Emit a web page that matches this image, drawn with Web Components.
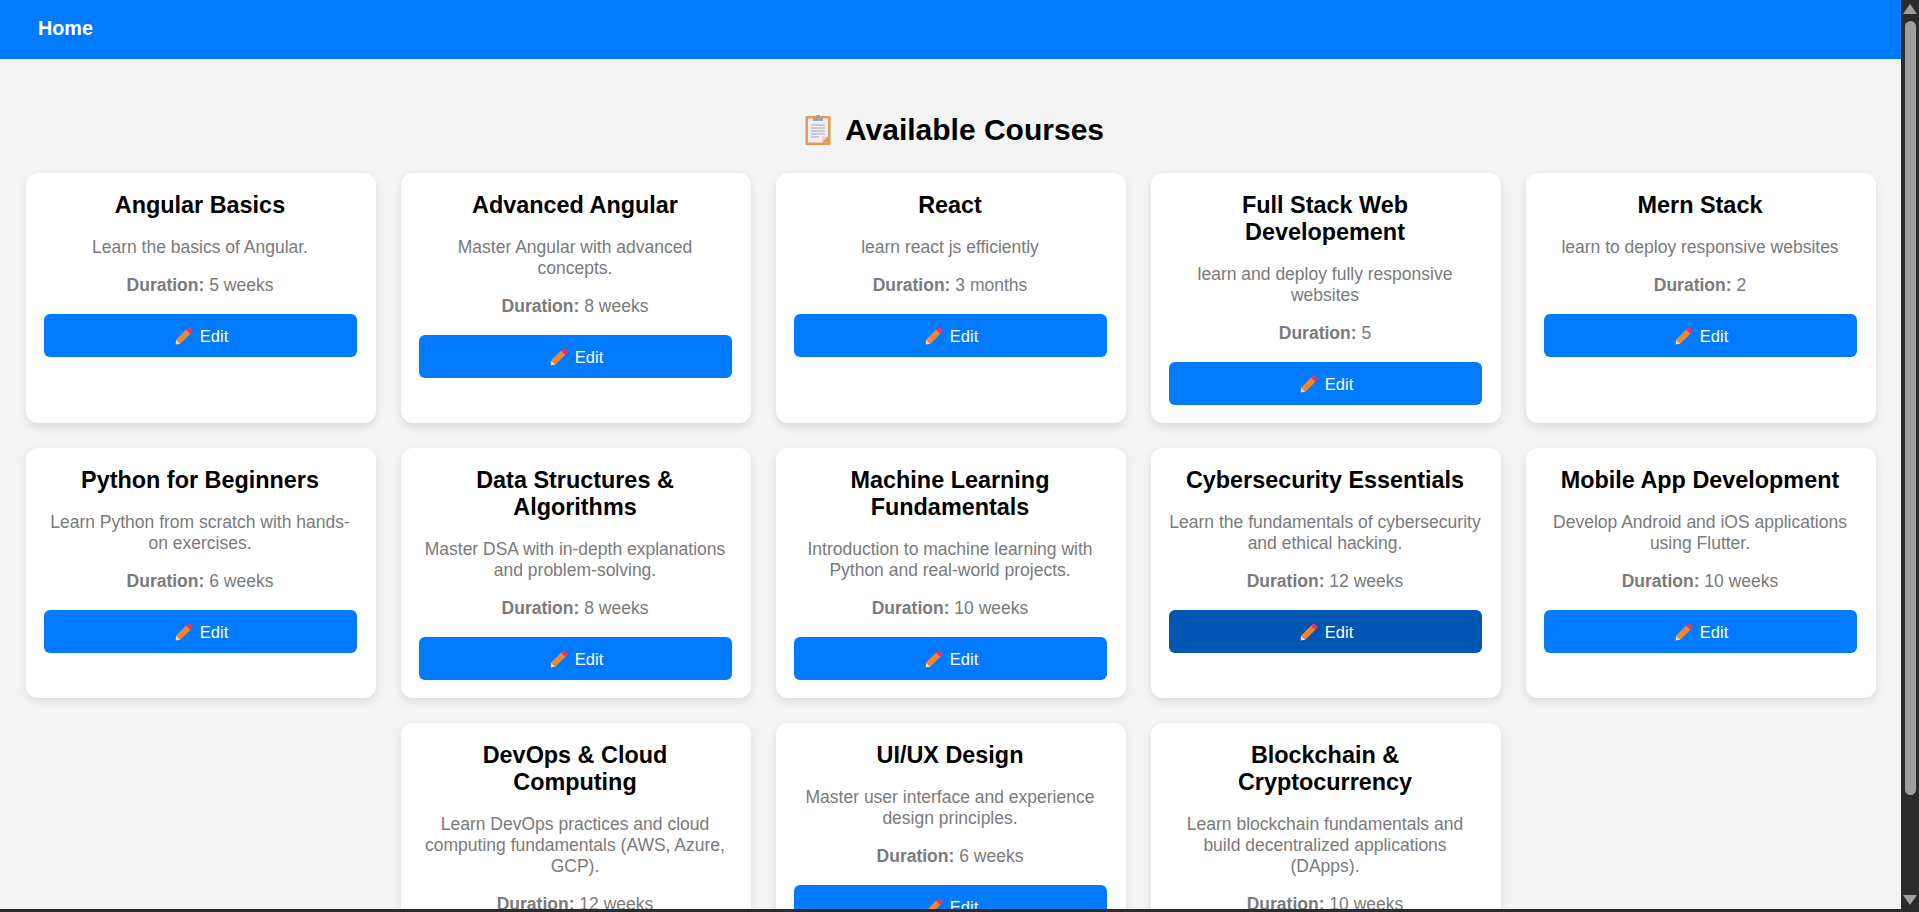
<!DOCTYPE html>
<html lang="en">
<head>
<meta charset="utf-8">
<title>Available Courses</title>
<style>
    html, body {
        margin: 0;
        height: 100%;
        overflow: hidden;
    }

    body {
        display: flex;
        flex-direction: column;
        background-color: #2b2b2b;
        font-family: "Liberation Sans", Arial, sans-serif;
    }

    #window {
        flex: 1;
        min-height: 0;
        display: flex;
    }

    #viewport {
        flex: 1;
        min-width: 0;
        overflow: hidden;
        background-color: #f4f4f4;
    }

    #bottom-edge {
        height: 3px;
    }
</style>
</head>
<body>
<div id="window">
    <div id="viewport">
        <app-navbar>Home</app-navbar>
        <page-heading>Available Courses</page-heading>
        <course-grid id="grid"></course-grid>
    </div>
    <fake-scrollbar></fake-scrollbar>
</div>
<div id="bottom-edge"></div>

<script>
class AppNavbar extends HTMLElement {
    connectedCallback() {
        this.attachShadow({ mode: "open" });
        this.shadowRoot.innerHTML = `
            <style>
                :host {
                    display: flex;
                    align-items: center;
                    height: 59px;
                    padding-left: 38px;
                    padding-bottom: 3px;
                    box-sizing: border-box;
                    background-color: #007bff;
                    color: white;
                    font-size: 19.8px;
                    font-weight: bold;
                }
            </style>
            <slot></slot>
        `;
    }
}

class PageHeading extends HTMLElement {
    connectedCallback() {
        this.attachShadow({ mode: "open" });
        this.shadowRoot.innerHTML = `
            <style>
                :host {
                    display: flex;
                    justify-content: center;
                    align-items: center;
                    height: 114px;
                    padding-top: 27px;
                    padding-left: 8px;
                    box-sizing: border-box;
                    color: black;
                    font-size: 30px;
                    font-weight: bold;
                }

                svg {
                    width: 26px;
                    height: 32px;
                    margin-right: 14px;
                }
            </style>
            <svg viewBox="0 0 26 32" aria-hidden="true">
                <rect x="0.5" y="2" width="25" height="29" rx="1.5" fill="#e79a4c"/>
                <rect x="3" y="4.5" width="20" height="24" fill="#f1edf8"/>
                <path d="M8 7 V3 H11 V1 H15 V3 H18 V7 Z" fill="#a5a2a6"/>
                <path d="M6 11 H20 M6 14 H20 M6 17 H20 M6 20 H20 M6 23 H14" stroke="#a9a6ad" stroke-width="1.2"/>
                <path d="M17 28.5 L23 22.5 H17 Z" fill="#d9d3dd"/>
                <path d="M17 28.5 L23 22.5 V28.5 Z" fill="#e79a4c"/>
            </svg>
            <slot></slot>
        `;
    }
}

class EditButton extends HTMLElement {
    connectedCallback() {
        const hover = this.hasAttribute("hover");

        this.attachShadow({ mode: "open" });
        this.shadowRoot.innerHTML = `
            <style>
                :host {
                    display: flex;
                    justify-content: center;
                    align-items: center;
                    gap: 7px;
                    height: 43px;
                    padding-left: 3px;
                    border-radius: 6px;
                    background-color: ${hover ? "#0056b3" : "#007bff"};
                    color: white;
                    font-size: 16.5px;
                }

                span {
                    position: relative;
                    top: 1px;
                }

                svg {
                    width: 18px;
                    height: 18px;
                }
            </style>
            <svg viewBox="0 0 18 18" aria-hidden="true">
                <path d="M0.6 17.4 L1.2 12.6 L5.4 16.8 Z" fill="#f6d3a8"/>
                <path d="M1.2 12.6 L11.2 2.6 L15.4 6.8 L5.4 16.8 Z" fill="#f4862f"/>
                <path d="M11.2 2.6 L13 0.8 Q14 0 15 0.8 L17.2 3 Q18 4 17.2 5 L15.4 6.8 Z" fill="#e8355f"/>
            </svg>
            <span>Edit</span>
        `;
    }
}

class CourseCard extends HTMLElement {
    connectedCallback() {
        this.attachShadow({ mode: "open" });
        this.shadowRoot.innerHTML = `
            <style>
                :host {
                    display: block;
                    width: 350px;
                    padding: 18px 19px 18px 18px;
                    box-sizing: border-box;
                    border-radius: 12px;
                    background-color: white;
                    box-shadow: 0 4px 10px rgba(0, 0, 0, 0.1);
                    text-align: center;
                }

                h3 {
                    margin: 0 0 18px;
                    padding-top: 1px;
                    color: black;
                    font-size: 23.4px;
                    line-height: 27px;
                }

                p {
                    margin: 0 0 17px;
                    color: #7a7a7a;
                    font-size: 17.5px;
                    line-height: 21px;
                }

                edit-button {
                    margin-top: 18px;
                }
            </style>
            <h3><slot name="title"></slot></h3>
            <p><slot name="description"></slot></p>
            <p><b>Duration:</b> <slot name="duration"></slot></p>
            <edit-button ${this.hasAttribute("hover") ? "hover" : ""}></edit-button>
        `;
    }
}

class CourseGrid extends HTMLElement {
    connectedCallback() {
        this.attachShadow({ mode: "open" });
        this.shadowRoot.innerHTML = `
            <style>
                :host {
                    display: flex;
                    flex-wrap: wrap;
                    justify-content: center;
                    gap: 25px;
                }
            </style>
            <slot></slot>
        `;
    }
}

class FakeScrollbar extends HTMLElement {
    connectedCallback() {
        this.attachShadow({ mode: "open" });
        this.shadowRoot.innerHTML = `
            <style>
                :host {
                    display: flex;
                    flex-direction: column;
                    align-items: center;
                    width: 18px;
                    background-color: #2b2b2b;
                }

                svg {
                    width: 14px;
                    height: 10px;
                    flex: none;
                }

                .up {
                    margin-top: 4px;
                }

                .down {
                    margin-bottom: 4px;
                }

                .track {
                    flex: 1;
                    width: 100%;
                    display: flex;
                    justify-content: center;
                }

                .thumb {
                    width: 11px;
                    height: 774px;
                    margin-top: 7px;
                    border-radius: 6px;
                    background-color: #9f9f9f;
                }
            </style>
            <svg class="up" viewBox="0 0 14 10"><path d="M7 0 L14 10 H0 Z" fill="#9f9f9f"/></svg>
            <div class="track"><div class="thumb"></div></div>
            <svg class="down" viewBox="0 0 14 10"><path d="M7 10 L14 0 H0 Z" fill="#9f9f9f"/></svg>
        `;
    }
}

customElements.define("app-navbar", AppNavbar);
customElements.define("page-heading", PageHeading);
customElements.define("edit-button", EditButton);
customElements.define("course-card", CourseCard);
customElements.define("course-grid", CourseGrid);
customElements.define("fake-scrollbar", FakeScrollbar);

const courses = [
    ["Angular Basics", "Learn the basics of Angular.", "5 weeks"],
    ["Advanced Angular", "Master Angular with advanced concepts.", "8 weeks"],
    ["React", "learn react js efficiently", "3 months"],
    ["Full Stack Web Developement", "learn and deploy fully responsive websites", "5"],
    ["Mern Stack", "learn to deploy responsive websites", "2"],
    ["Python for Beginners", "Learn Python from scratch with hands-on exercises.", "6 weeks"],
    ["Data Structures & Algorithms", "Master DSA with in-depth explanations and problem-solving.", "8 weeks"],
    ["Machine Learning Fundamentals", "Introduction to machine learning with Python and real-world projects.", "10 weeks"],
    ["Cybersecurity Essentials", "Learn the fundamentals of cybersecurity and ethical hacking.", "12 weeks"],
    ["Mobile App Development", "Develop Android and iOS applications using Flutter.", "10 weeks"],
    ["DevOps & Cloud Computing", "Learn DevOps practices and cloud computing fundamentals (AWS, Azure, GCP).", "12 weeks"],
    ["UI/UX Design", "Master user interface and experience design principles.", "6 weeks"],
    ["Blockchain & Cryptocurrency", "Learn blockchain fundamentals and build decentralized applications (DApps).", "10 weeks"]
];

const grid = document.querySelector("#grid");
for (const [title, description, duration] of courses) {
    const card = document.createElement("course-card");
    if (title === "Cybersecurity Essentials") {
        card.setAttribute("hover", "");
    }

    for (const [slot, text] of [["title", title], ["description", description], ["duration", duration]]) {
        const span = document.createElement("span");
        span.slot = slot;
        span.textContent = text;
        card.appendChild(span);
    }
    grid.appendChild(card);
}
</script>
</body>
</html>
